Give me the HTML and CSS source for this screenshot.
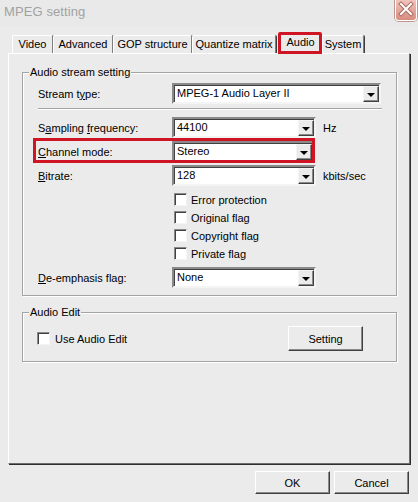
FILE: index.html
```html
<!DOCTYPE html>
<html>
<head>
<meta charset="utf-8">
<title>MPEG setting</title>
<link rel="stylesheet" href="styles.css">
</head>
<body>
<div class="window">
  <div class="titlebar">
    <span class="title">MPEG setting</span>
    <span class="close">
      <svg width="22" height="21" viewBox="0 0 22 21">
        <path d="M6 5 L16 15 M16 5 L6 15" stroke="#a86a62" stroke-width="4" stroke-linecap="square" fill="none"/>
        <path d="M6 5 L16 15 M16 5 L6 15" stroke="#ffffff" stroke-width="2" stroke-linecap="square" fill="none"/>
      </svg>
    </span>
  </div>

  <div class="tabs">
    <div class="tab tab-video">Video</div>
    <div class="tab tab-adv">Advanced</div>
    <div class="tab tab-gop">GOP structure</div>
    <div class="tab tab-quant">Quantize matrix</div>
    <div class="tab tab-active tab-audio">Audio</div>
    <div class="tab tab-system">System</div>
  </div>

  <div class="panel">
    <div class="group group-stream">
      <span class="legend">Audio stream setting</span>

      <div class="row">
        <span class="label">Stream t<u>y</u>pe:</span>
        <div class="combo combo-wide"><span class="value">MPEG-1 Audio Layer II</span><span class="arrow"></span></div>
      </div>

      <div class="separator"></div>

      <div class="row">
        <span class="label">S<u>a</u>mpling <u>f</u>requency:</span>
        <div class="combo"><span class="value">44100</span><span class="arrow"></span></div>
        <span class="unit">Hz</span>
      </div>

      <div class="row row-gap">
        <span class="label"><u>C</u>hannel mode:</span>
        <div class="combo combo-channel"><span class="value">Stereo</span><span class="arrow"></span></div>
        <span class="mark"></span>
      </div>

      <div class="row row-gap">
        <span class="label"><u>B</u>itrate:</span>
        <div class="combo"><span class="value">128</span><span class="arrow"></span></div>
        <span class="unit">kbits/sec</span>
      </div>

      <div class="checks">
        <div class="check"><span class="box"></span><span>Error protection</span></div>
        <div class="check"><span class="box"></span><span>Original flag</span></div>
        <div class="check"><span class="box"></span><span>Copyright flag</span></div>
        <div class="check"><span class="box"></span><span>Private flag</span></div>
      </div>

      <div class="row row-deemph">
        <span class="label"><u>D</u>e-emphasis flag:</span>
        <div class="combo"><span class="value">None</span><span class="arrow"></span></div>
      </div>
    </div>

    <div class="group group-edit">
      <span class="legend">Audio Edit</span>
      <div class="check check-edit"><span class="box"></span><span>Use Audio Edit</span></div>
      <button class="btn btn-setting">Setting</button>
    </div>
  </div>

  <div class="footer">
    <button class="btn">OK</button>
    <button class="btn">Cancel</button>
  </div>
</div>
</body>
</html>
```

FILE: styles.css
```css
* { box-sizing: border-box; }

html, body {
  margin: 0;
  padding: 0;
}

body {
  width: 418px;
  height: 502px;
  overflow: hidden;
  background: #ebebeb;
  font-family: "Liberation Sans", Arial, sans-serif;
  font-size: 11px;
  color: #000;
}

.window {
  display: flex;
  flex-direction: column;
  height: 100%;
}

/* Title bar */
.titlebar {
  height: 25px;
  display: flex;
  justify-content: space-between;
  align-items: flex-start;
  padding: 0 1px 0 4px;
  background: #e9e9e9;
}

.title {
  font-size: 13px;
  line-height: 24px;
  color: #a2a2a2;
  letter-spacing: 0.1px;
}

.close {
  width: 22px;
  height: 21px;
  display: block;
  border: 1px solid #ffffff;
  border-top: 0;
  border-radius: 0 0 4px 4px;
  background: linear-gradient(#f0c4bd, #d88c80);
  box-shadow: 0 0 0 1px #c0968f;
}

.close svg { display: block; margin: -1px 0 0 -1px; }

/* Tabs */
.tabs {
  display: flex;
  align-items: flex-end;
  height: 21px;
  margin-top: 7px;
  padding-left: 12px;
  position: relative;
  z-index: 1;
}

.tab {
  height: 18px;
  line-height: 17px;
  text-align: center;
  white-space: nowrap;
  border-top: 1px solid #ffffff;
  border-left: 1px solid #ffffff;
  border-right: 1px solid #7e7e7e;
  box-shadow: 1px 0 0 #3c3c3c;
  border-radius: 2px 2px 0 0;
}

.tab-video { width: 41px; }
.tab-adv { width: 60px; }
.tab-gop { width: 79px; }
.tab-quant { width: 84px; }
.tab-audio { width: 44px; margin-left: 2px; }
.tab-system { width: 42px; }

.tab-active {
  height: 22px;
  margin-bottom: -1px;
  background: #ebebeb;
  line-height: 18px;
  outline: 3px solid #cf1424;
  outline-offset: -3px;
  box-shadow: none;
  border-right: none;
}

/* Panel */
.panel {
  height: 411px;
  margin: 0 8px 0 8px;
  padding: 18px 12px 0 13px;
  border: 1px solid;
  border-color: #ffffff #6c6c6c #6c6c6c #ffffff;
  box-shadow: 1px 1px 0 #2e2e2e;
}

.group {
  position: relative;
  border: 1px solid #a3a3a3;
  box-shadow: inset 1px 1px 0 #ffffff, 1px 1px 0 #ffffff;
}

.legend {
  position: absolute;
  top: -7px;
  left: 6px;
  padding: 0 1px;
  background: #ebebeb;
  line-height: 13px;
}

.group-stream {
  height: 224px;
  padding: 10px 0 0 15px;
  display: flex;
  flex-direction: column;
}

.row {
  display: grid;
  grid-template-columns: 134px auto auto;
  align-items: center;
  justify-content: start;
  height: 21px;
  position: relative;
}

.row-gap { margin-top: 3px; }
.row-deemph { margin-top: 7px; }

.label { text-underline-offset: 1px; }

.separator {
  width: 344px;
  height: 2px;
  margin: 4px 0 7px;
  border-top: 1px solid #a3a3a3;
  border-bottom: 1px solid #ffffff;
}

/* Combo box */
.combo {
  width: 144px;
  height: 21px;
  display: flex;
  align-items: stretch;
  background: #ffffff;
  border: 2px solid;
  border-color: #8a8a8a #f4f4f4 #f4f4f4 #8a8a8a;
  box-shadow: inset 1px 1px 0 #404040;
}

.combo-wide { width: 209px; }
.combo-channel { width: 142px; }

.value {
  flex: 1;
  padding-left: 3px;
  line-height: 17px;
}

.arrow {
  width: 16px;
  margin: 1px 0 0 0;
  position: relative;
  background: #ebebeb;
  border: 1px solid;
  border-color: #f4f4f4 #404040 #404040 #f4f4f4;
  box-shadow: inset -1px -1px 0 #8a8a8a;
}

.arrow::after {
  content: "";
  position: absolute;
  left: 3px;
  top: 6px;
  border-left: 4px solid transparent;
  border-right: 4px solid transparent;
  border-top: 4px solid #000;
}

.unit { padding-left: 7px; }

/* red annotation box */
.mark {
  position: absolute;
  left: -5px;
  top: -3px;
  width: 282px;
  height: 25px;
  border: 3px solid #cf1424;
  pointer-events: none;
}

/* Checkboxes */
.checks {
  display: flex;
  flex-direction: column;
  gap: 5px;
  margin: 7px 0 0 136px;
}

.check {
  display: flex;
  align-items: center;
  gap: 4px;
  height: 13px;
}

.box {
  width: 13px;
  height: 13px;
  flex: none;
  background: #ffffff;
  border: 1px solid;
  border-color: #8a8a8a #f4f4f4 #f4f4f4 #8a8a8a;
  box-shadow: inset 1px 1px 0 #404040;
}

.group-edit {
  height: 50px;
  margin-top: 16px;
  padding: 3px 33px 0 14px;
  display: flex;
  align-items: center;
  justify-content: space-between;
}

.check-edit { gap: 5px; }

/* Buttons */
.btn {
  width: 75px;
  height: 23px;
  padding: 0;
  font: inherit;
  color: #000;
  background: #ebebeb;
  border: 1px solid;
  border-color: #ffffff #404040 #404040 #ffffff;
  box-shadow: inset -1px -1px 0 #8a8a8a;
}

.btn-setting { height: 25px; }

.footer {
  display: flex;
  justify-content: flex-end;
  gap: 4px;
  padding-right: 9px;
  margin-top: 7px;
}
```
